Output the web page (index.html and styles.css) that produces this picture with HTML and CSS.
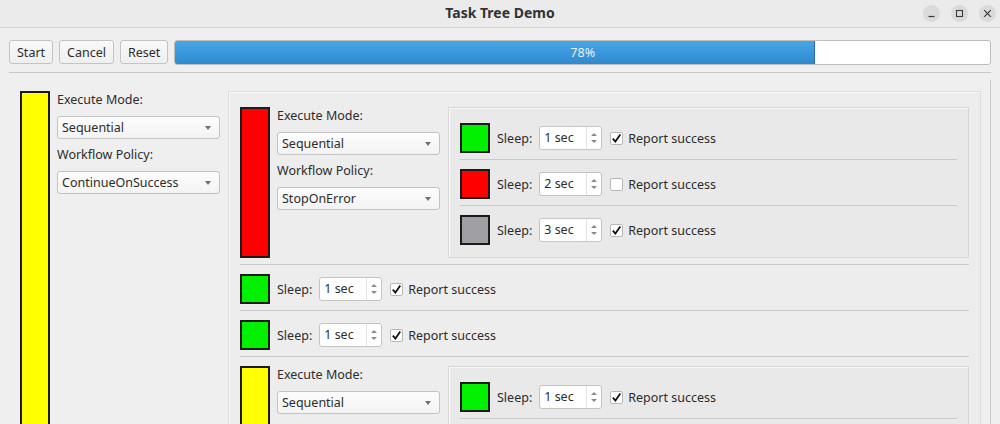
FILE: index.html
```html
<!DOCTYPE html>
<html lang="en">
  <head>
    <meta charset="UTF-8" />
    <meta name="viewport" content="width=device-width, initial-scale=1.0" />
    <title>Task Tree Demo</title>
    <link rel="stylesheet" href="styles.css">
  </head>
  <body>
    <!-- Window Title Bar -->
    <header class="titlebar">
      <span class="title">Task Tree Demo</span>
      <div class="window-buttons">
        <span>
          <svg width="17" height="17" viewBox="0 0 17 17"><path d="M5.5 11.5h6" stroke="#3a3a3a" stroke-width="1.2" fill="none"/></svg>
        </span>
        <span>
          <svg width="17" height="17" viewBox="0 0 17 17"><rect x="5.5" y="5.5" width="6" height="6" stroke="#3a3a3a" stroke-width="1.1" fill="none"/></svg>
        </span>
        <span>
          <svg width="17" height="17" viewBox="0 0 17 17"><path d="M5.2 5.2l6.6 6.6M11.8 5.2l-6.6 6.6" stroke="#3a3a3a" stroke-width="1.2" fill="none"/></svg>
        </span>
      </div>
    </header>

    <!-- Toolbar with Progress -->
    <div class="toolbar">
      <button>Start</button>
      <button>Cancel</button>
      <button>Reset</button>
      <div class="progress">
        <div class="progress-fill" style="width: 78.5%"></div>
        <span class="progress-label">78%</span>
      </div>
    </div>

    <!-- Task Tree -->
    <div class="scroll">
      <div class="group root">
        <div class="bar yellow"></div>
        <div class="config">
          <label>Execute Mode:</label>
          <div class="combo">Sequential</div>
          <label>Workflow Policy:</label>
          <div class="combo">ContinueOnSuccess</div>
        </div>
        <div class="panel">

          <div class="row group">
            <div class="bar red"></div>
            <div class="config">
              <label>Execute Mode:</label>
              <div class="combo">Sequential</div>
              <label>Workflow Policy:</label>
              <div class="combo">StopOnError</div>
            </div>
            <div class="panel nested">
              <div class="row task">
                <div class="swatch green"></div>
                <span>Sleep:</span>
                <div class="spin"><span class="spin-value">1 sec</span><span class="spin-arrows"></span></div>
                <span class="check checked"><svg width="11" height="11" viewBox="0 0 11 11"><path d="M1.8 5.6l2.6 3 4.9-7" stroke="#111" stroke-width="1.8" fill="none"/></svg></span>
                <span class="check-label">Report success</span>
              </div>
              <div class="row task">
                <div class="swatch red"></div>
                <span>Sleep:</span>
                <div class="spin"><span class="spin-value">2 sec</span><span class="spin-arrows"></span></div>
                <span class="check"></span>
                <span class="check-label">Report success</span>
              </div>
              <div class="row task">
                <div class="swatch grey"></div>
                <span>Sleep:</span>
                <div class="spin"><span class="spin-value">3 sec</span><span class="spin-arrows"></span></div>
                <span class="check checked"><svg width="11" height="11" viewBox="0 0 11 11"><path d="M1.8 5.6l2.6 3 4.9-7" stroke="#111" stroke-width="1.8" fill="none"/></svg></span>
                <span class="check-label">Report success</span>
              </div>
            </div>
          </div>

          <div class="row task">
            <div class="swatch green"></div>
            <span>Sleep:</span>
            <div class="spin"><span class="spin-value">1 sec</span><span class="spin-arrows"></span></div>
            <span class="check checked"><svg width="11" height="11" viewBox="0 0 11 11"><path d="M1.8 5.6l2.6 3 4.9-7" stroke="#111" stroke-width="1.8" fill="none"/></svg></span>
            <span class="check-label">Report success</span>
          </div>

          <div class="row task">
            <div class="swatch green"></div>
            <span>Sleep:</span>
            <div class="spin"><span class="spin-value">1 sec</span><span class="spin-arrows"></span></div>
            <span class="check checked"><svg width="11" height="11" viewBox="0 0 11 11"><path d="M1.8 5.6l2.6 3 4.9-7" stroke="#111" stroke-width="1.8" fill="none"/></svg></span>
            <span class="check-label">Report success</span>
          </div>

          <div class="row group">
            <div class="bar yellow"></div>
            <div class="config">
              <label>Execute Mode:</label>
              <div class="combo">Sequential</div>
              <label>Workflow Policy:</label>
              <div class="combo">StopOnError</div>
            </div>
            <div class="panel nested">
              <div class="row task">
                <div class="swatch green"></div>
                <span>Sleep:</span>
                <div class="spin"><span class="spin-value">1 sec</span><span class="spin-arrows"></span></div>
                <span class="check checked"><svg width="11" height="11" viewBox="0 0 11 11"><path d="M1.8 5.6l2.6 3 4.9-7" stroke="#111" stroke-width="1.8" fill="none"/></svg></span>
                <span class="check-label">Report success</span>
              </div>
              <div class="row task">
                <div class="swatch green"></div>
                <span>Sleep:</span>
                <div class="spin"><span class="spin-value">2 sec</span><span class="spin-arrows"></span></div>
                <span class="check checked"><svg width="11" height="11" viewBox="0 0 11 11"><path d="M1.8 5.6l2.6 3 4.9-7" stroke="#111" stroke-width="1.8" fill="none"/></svg></span>
                <span class="check-label">Report success</span>
              </div>
            </div>
          </div>

        </div>
      </div>
    </div>
  </body>
</html>
```

FILE: styles.css
```css
/* General Styling */
* {
  box-sizing: border-box;
  margin: 0;
  padding: 0;
}

html,
body {
  height: 100%;
  overflow: hidden;
}

body {
  font-family: "Noto Sans", "Open Sans", sans-serif;
  font-size: 12.5px;
  color: #2c2c2c;
  background-color: #efefef;
}

/* Title Bar */
.titlebar {
  display: grid;
  grid-template-columns: 1fr auto 1fr;
  align-items: center;
  height: 28px;
  background-color: #ebebeb;
  border-bottom: 1px solid #d4d4d4;
}

.title {
  grid-column: 2;
  font-size: 14px;
  font-weight: bold;
  color: #333;
  padding-bottom: 2px;
}

.window-buttons {
  display: flex;
  justify-content: flex-end;
  gap: 11px;
  padding-right: 4px;
  padding-bottom: 1px;
}

.window-buttons span {
  display: flex;
  width: 17px;
  height: 17px;
  border-radius: 50%;
  background-color: #dadada;
}

/* Toolbar */
.toolbar {
  display: flex;
  align-items: flex-start;
  gap: 6px;
  margin: 0 9px;
  padding: 12px 0 7px;
  border-bottom: 1px solid #c8c8c8;
}

.toolbar button {
  height: 24px;
  padding: 0 7px;
  font: inherit;
  color: #2c2c2c;
  background: linear-gradient(#f9f9f9, #efefef);
  border: 1px solid #c4c4c4;
  border-radius: 3px;
}

.progress {
  position: relative;
  flex: 1;
  height: 25px;
  background-color: #fff;
  border: 1px solid #bdbdbd;
  border-radius: 3px;
  overflow: hidden;
}

.progress-fill {
  height: 100%;
  background: linear-gradient(#47a6e6, #2f89cf);
  border-right: 1px solid #2a6ca5;
}

.progress-label {
  position: absolute;
  inset: 0;
  display: flex;
  align-items: center;
  justify-content: center;
  color: #e4f1fc;
}

/* Task Tree */
.scroll {
  margin: 7px 9px 0;
  border-right: 1px solid #cbcbcb;
  height: 100%;
}

.root {
  padding: 11px 9px 0 11px;
}

.group {
  display: flex;
  gap: 7px;
}

.bar {
  width: 30px;
  flex-shrink: 0;
  border: 2px solid #1b1b1b;
}

.swatch {
  width: 30px;
  height: 30px;
  flex-shrink: 0;
  border: 2px solid #1b1b1b;
}

.yellow { background-color: #ffff00; }
.red { background-color: #ff0000; }
.green { background-color: #00f000; }
.grey { background-color: #a0a0a4; }

.config {
  display: flex;
  flex-direction: column;
  width: 163px;
  flex-shrink: 0;
}

.config label {
  line-height: 18px;
  margin-bottom: 7px;
}

.combo {
  display: flex;
  align-items: center;
  justify-content: space-between;
  height: 23px;
  margin-bottom: 7px;
  padding: 0 8px 0 4px;
  background: linear-gradient(#fdfdfd, #f3f3f3);
  border: 1px solid #c3c3c3;
  border-radius: 3px;
}

.combo::after {
  content: "";
  border-top: 4px solid #707070;
  border-left: 3.5px solid transparent;
  border-right: 3.5px solid transparent;
}

.panel {
  flex: 1;
  margin-left: 1px;
  padding: 6px 11px 4px;
  background-color: #ededed;
  border: 1px solid #dcdcdc;
  box-shadow: inset 1px 1px 0 #f7f7f7;
}

.panel.nested {
  padding: 6px 11px;
  background-color: #e9e9e9;
  border-color: #d7d7d7;
}

.row {
  padding: 9px 0 6px;
}

.row + .row {
  border-top: 1px solid #c9c9c9;
}

/* Task Row */
.task {
  display: flex;
  align-items: center;
  gap: 7px;
}

.spin {
  display: flex;
  width: 63px;
  height: 24px;
  background-color: #fff;
  border: 1px solid #c4c4c4;
  border-radius: 3px;
}

.spin-value {
  flex: 1;
  padding-left: 4px;
  line-height: 22px;
}

.spin-arrows {
  display: flex;
  flex-direction: column;
  align-items: center;
  justify-content: center;
  gap: 4px;
  width: 15px;
  border-left: 1px solid #e2e2e2;
}

.spin-arrows::before,
.spin-arrows::after {
  content: "";
  border-left: 3px solid transparent;
  border-right: 3px solid transparent;
}

.spin-arrows::before {
  border-bottom: 3.5px solid #8a8a8a;
}

.spin-arrows::after {
  border-top: 3.5px solid #8a8a8a;
}

.check {
  display: flex;
  width: 13px;
  height: 13px;
  margin-left: 1px;
  background-color: #fff;
  border: 1px solid #b8b8b8;
  border-radius: 2px;
}

.check-label {
  margin-left: -2px;
}
```
